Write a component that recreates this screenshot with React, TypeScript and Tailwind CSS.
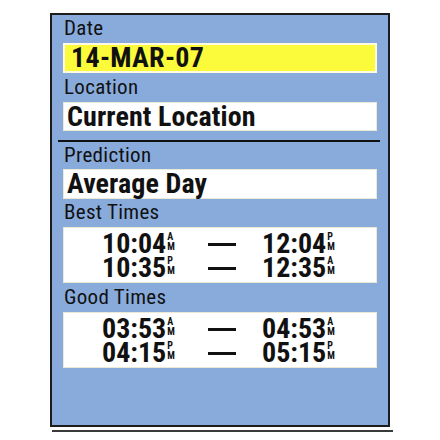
import React from "react";

const font = { fontFamily: '"Roboto Condensed", "DejaVu Sans Condensed", sans-serif' };

type Row = { a: string; ap: string; b: string; bp: string };

function Time({ t, p }: { t: string; p: string }) {
  return (
    <div className="flex items-start">
      <span className="text-[28px] leading-[22px] font-bold">{t}</span>
      <span className="flex flex-col text-[10px] leading-[10px] font-bold ml-[1px] -mt-[1px]">
        <span>{p}</span>
        <span>M</span>
      </span>
    </div>
  );
}

function TimeBox({ rows }: { rows: Row[] }) {
  return (
    <div className="h-[56px] bg-white border border-[#ece8d6] pt-[4px]">
      {rows.map((r, i) => (
        <div key={i} className="flex h-[24px] items-center">
          <div className="w-[38px]" />
          <div className="w-[72px]"><Time t={r.a} p={r.ap} /></div>
          <div className="w-[34px]" />
          <div className="w-[28px] h-[3px] bg-[#111]" />
          <div className="w-[26px]" />
          <div className="w-[80px]"><Time t={r.b} p={r.bp} /></div>
        </div>
      ))}
    </div>
  );
}

function Label({ text, h }: { text: string; h: string }) {
  return (
    <div className={`${h} flex items-center text-[21px] text-[#111] pl-[1px] tracking-[0.3px]`}>
      {text}
    </div>
  );
}

export default function App() {
  return (
    <div className="w-[440px] h-[440px] bg-white" style={font}>
      <div className="pt-[13px] pl-[50px]">
        <div className="w-[340px] h-[414px] border-2 border-[#1c1c1c] bg-[#88abdc] px-[11px] text-[#111]">
          <Label text="Date" h="h-[28px]" />
          <div className="h-[30px] bg-[#fbfb3c] border-2 border-[#fffbe0] flex items-center pl-[6px] text-[28px] font-bold leading-none tracking-[0.3px]">
            14-MAR-07
          </div>
          <Label text="Location" h="h-[29px]" />
          <div className="h-[29px] bg-white border border-[#ece8d6] flex items-center pl-[3px] text-[28px] font-bold leading-none tracking-[0.1px]">
            Current Location
          </div>
          <div className="mt-[9px] h-[2px] bg-[#111] ml-[-5px] mr-[-3px]" />
          <Label text="Prediction" h="h-[27px]" />
          <div className="h-[30px] bg-white border border-[#ece8d6] flex items-center pl-[3px] text-[28px] font-bold leading-none tracking-[0.1px]">
            Average Day
          </div>
          <Label text="Best Times" h="h-[28px]" />
          <TimeBox
            rows={[
              { a: "10:04", ap: "A", b: "12:04", bp: "P" },
              { a: "10:35", ap: "P", b: "12:35", bp: "A" },
            ]}
          />
          <Label text="Good Times" h="h-[29px]" />
          <TimeBox
            rows={[
              { a: "03:53", ap: "A", b: "04:53", bp: "A" },
              { a: "04:15", ap: "P", b: "05:15", bp: "P" },
            ]}
          />
        </div>
        <div className="mt-[3px] ml-[2px] w-[341px] h-[2px] bg-[#3a3a3a]" />
      </div>
    </div>
  );
}
